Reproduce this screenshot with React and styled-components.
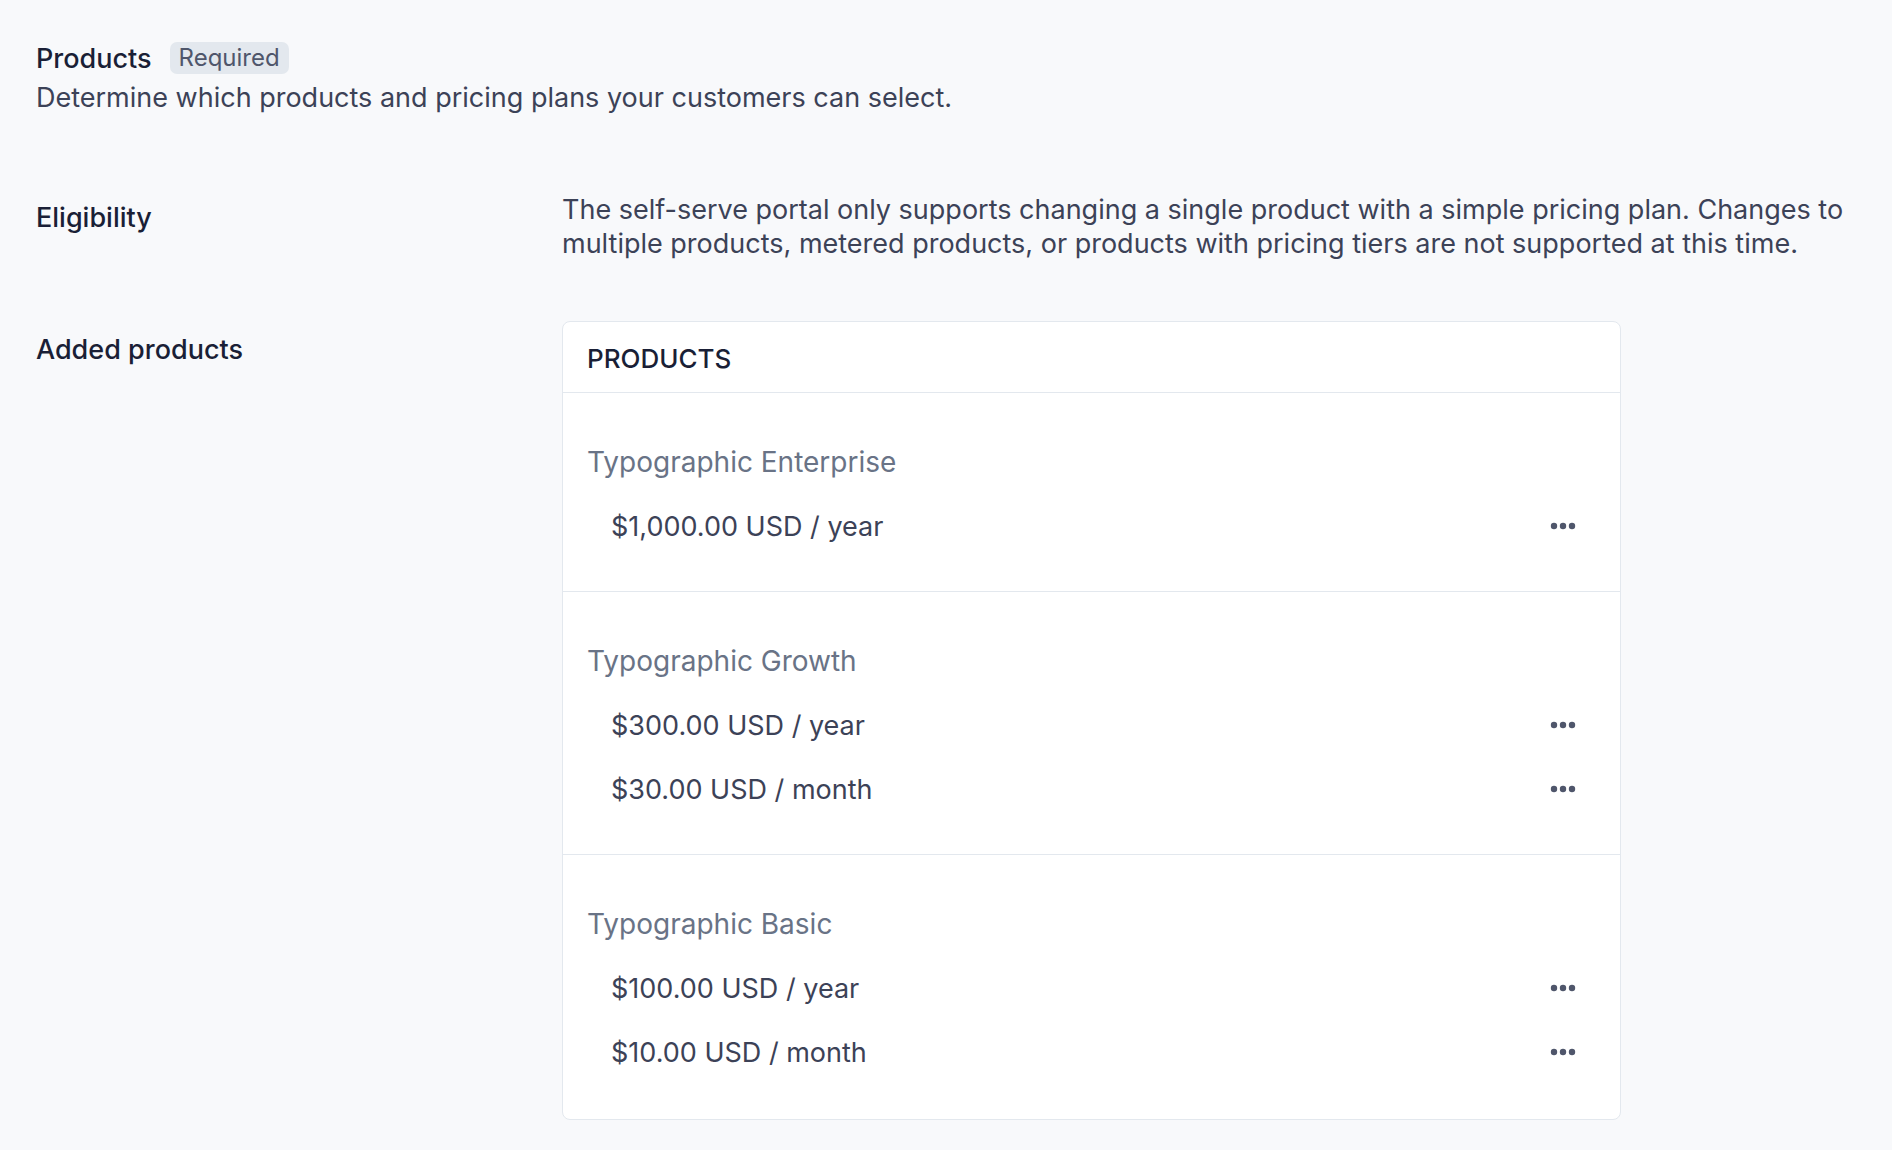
import styled, { createGlobalStyle } from "styled-components";

const GlobalStyle = createGlobalStyle`
  body {
    margin: 0;
    background: #f8f9fb;
    font-family: Inter, "Noto Sans", sans-serif;
    color: #1a1f36;
  }
`;

const products = [
    {name: "Typographic Enterprise", prices: ["$1,000.00 USD / year"]},
    {name: "Typographic Growth", prices: ["$300.00 USD / year", "$30.00 USD / month"]},
    {name: "Typographic Basic", prices: ["$100.00 USD / year", "$10.00 USD / month"]},
];

const App = () => {
    return (
        <Page>
            <GlobalStyle/>
            <Header>
                <TitleRow>
                    <Title>Products</Title>
                    <Badge>Required</Badge>
                </TitleRow>
                <Description>Determine which products and pricing plans your customers can select.</Description>
            </Header>

            <FieldRow>
                <Label offset={8}>Eligibility</Label>
                <Text>
                    The self-serve portal only supports changing a single product with a simple pricing plan. Changes to
                    multiple products, metered products, or products with pricing tiers are not supported at this time.
                </Text>
            </FieldRow>

            <FieldRow>
                <Label offset={12}>Added products</Label>
                <Card>
                    <CardHeader>Products</CardHeader>
                    {products.map(product => (
                        <ProductSection key={product.name}>
                            <ProductName>{product.name}</ProductName>
                            {product.prices.map(price => (
                                <PriceRow key={price}>
                                    <span>{price}</span>
                                    <MoreButton aria-label="More">
                                        <svg width="26" height="8" viewBox="0 0 26 8">
                                            <circle cx="4" cy="4" r="3.2" fill="#4f566b"/>
                                            <circle cx="13" cy="4" r="3.2" fill="#4f566b"/>
                                            <circle cx="22" cy="4" r="3.2" fill="#4f566b"/>
                                        </svg>
                                    </MoreButton>
                                </PriceRow>
                            ))}
                        </ProductSection>
                    ))}
                </Card>
            </FieldRow>
        </Page>
    );
}

export default App;


const Page = styled.div`
  padding: 40px 20px 28px 36px;
  display: flex;
  flex-direction: column;
  gap: 60px;
`;

const Header = styled.div`
  display: flex;
  flex-direction: column;
  margin-bottom: 18px;
`;

const TitleRow = styled.div`
  display: flex;
  align-items: center;
  gap: 18px;
  height: 36px;
`;

const Title = styled.h2`
  margin: 0;
  font-size: 27px;
  font-weight: 500;
  color: #1a1f36;
`;

const Badge = styled.span`
  background: #e3e8ee;
  color: #4f566b;
  font-size: 24px;
  font-weight: 400;
  padding: 2px 9px;
  border-radius: 7px;
  line-height: 28px;
`;

const Description = styled.p`
  margin: 5px 0 0;
  font-size: 27px;
  line-height: 34px;
  color: #3c4257;
`;

const FieldRow = styled.div`
  display: grid;
  grid-template-columns: 526px 1fr;
  align-items: start;
`;

const Label = styled.div`
  padding-top: ${({offset}) => offset}px;
  font-size: 27px;
  line-height: 34px;
  font-weight: 500;
  color: #1a1f36;
`;

const Text = styled.p`
  margin: 0;
  font-size: 27px;
  line-height: 34px;
  color: #3c4257;
`;

const Card = styled.div`
  width: 1059px;
  box-sizing: border-box;
  background: #fff;
  border: 1px solid #e3e8ee;
  border-radius: 8px;
  overflow: hidden;
`;

const CardHeader = styled.div`
  height: 71px;
  display: flex;
  align-items: center;
  padding: 2px 24px 0;
  box-sizing: border-box;
  border-bottom: 1px solid #e3e8ee;
  font-size: 26px;
  font-weight: 500;
  text-transform: uppercase;
  color: #1a1f36;
`;

const ProductSection = styled.div`
  padding: 45px 24px 33px;
  border-bottom: 1px solid #e3e8ee;

  &:last-child {
    border-bottom: none;
    padding-bottom: 35px;
  }
`;

const ProductName = styled.div`
  font-size: 28px;
  line-height: 48px;
  margin-bottom: 8px;
  color: #697386;
`;

const PriceRow = styled.div`
  height: 64px;
  display: flex;
  align-items: center;
  justify-content: space-between;
  padding: 0 20px 0 24px;
  font-size: 27px;
  color: #3c4257;
`;

const MoreButton = styled.button`
  border: none;
  background: none;
  padding: 0;
  display: flex;
  cursor: pointer;
`;
